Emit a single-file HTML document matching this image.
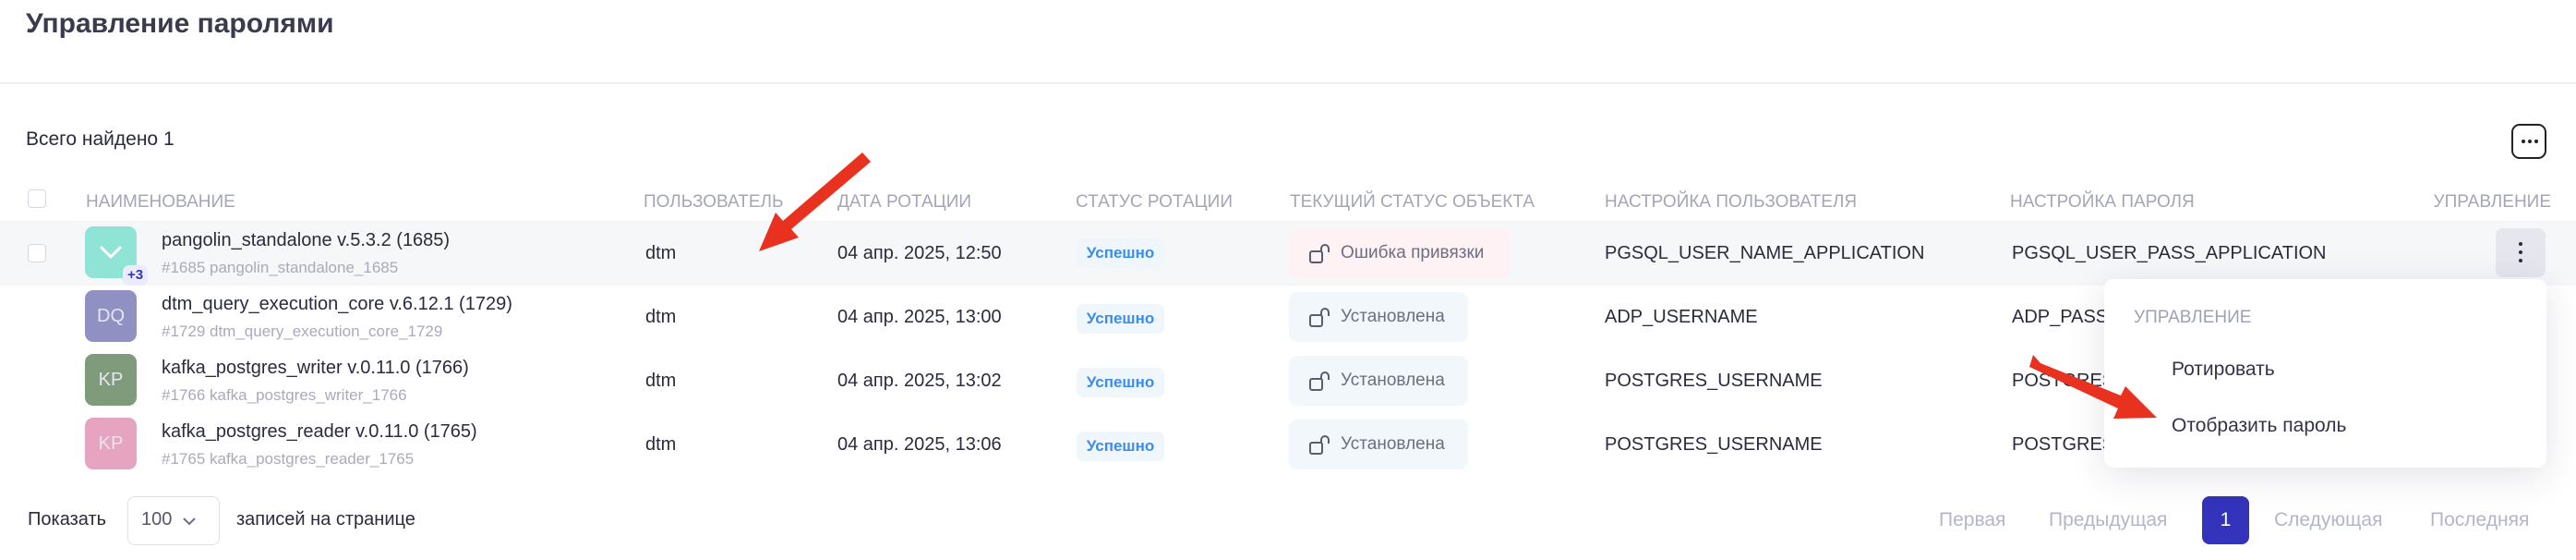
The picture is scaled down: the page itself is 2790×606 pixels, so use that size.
<!DOCTYPE html>
<html><head><meta charset="utf-8"><style>
*{margin:0;padding:0;box-sizing:border-box}
body{width:2790px;height:606px;background:#fff;font-family:"Liberation Sans",sans-serif;color:#2a2b3d;position:relative;overflow:hidden}
.a{position:absolute;white-space:nowrap}
.h{font-size:19px;color:#a4a5b8;text-transform:uppercase;top:208px}
.cb{position:absolute;width:20px;height:20px;border:1.5px solid #d6d7e0;border-radius:4px;left:30px;background:#fff}
.av{position:absolute;left:92px;width:56px;height:56px;border-radius:9px;color:#e6e6f2;font-size:20px;display:flex;align-items:center;justify-content:center}
.nm{font-size:20px;left:175px}
.sb{font-size:17px;color:#a9aabb;left:175px}
.t{font-size:20px}
.ok{position:absolute;left:1166px;width:95px;height:32px;border-radius:7px;background:#eff6fc;color:#3b8ded;font-weight:bold;font-size:17px;display:flex;align-items:center;justify-content:center}
.os{position:absolute;left:1396px;width:194px;height:54px;border-radius:9px;background:#f1f7fb;color:#6c6e82;font-size:19px;display:flex;align-items:center;padding-left:22px}
.os svg{margin-right:11px}
.pg{font-size:21px;color:#b4b5c8;top:551px}
</style></head><body>
<div class="a" style="left:28px;top:9px;font-size:30px;font-weight:bold;color:#3a3b4f">Управление паролями</div>
<div style="position:absolute;left:0;top:89px;width:2790px;height:2px;background:#eef0f4"></div>
<div class="a" style="left:28px;top:139px;font-size:21px">Всего найдено 1</div>
<div style="position:absolute;left:2720px;top:134px;width:38px;height:38px;border:2.5px solid #222;border-radius:9px">
<div style="position:absolute;left:9px;top:15px;width:4px;height:4px;border-radius:2px;background:#222;box-shadow:7px 0 0 #222,14px 0 0 #222"></div></div>

<div class="cb" style="top:205px"></div>
<div class="a h" style="left:93px">Наименование</div>
<div class="a h" style="left:697px">Пользователь</div>
<div class="a h" style="left:907px">Дата ротации</div>
<div class="a h" style="left:1165px">Статус ротации</div>
<div class="a h" style="left:1397px">Текущий статус объекта</div>
<div class="a h" style="left:1738px">Настройка пользователя</div>
<div class="a h" style="left:2177px">Настройка пароля</div>
<div class="a h" style="right:27px">Управление</div>

<div style="position:absolute;left:0;top:239px;width:2790px;height:70px;background:#f6f7f9"></div>
<div class="cb" style="top:264px"></div>

<!-- row 1 -->
<div class="av" style="top:245px;background:#8fe4d6"><svg width="24" height="14" viewBox="0 0 24 14"><path d="M2 2l10 10L22 2" fill="none" stroke="#fff" stroke-width="3" stroke-linecap="round" stroke-linejoin="round"/></svg></div>
<div style="position:absolute;left:133px;top:287px;width:27px;height:22px;border-radius:7px;background:#ecebfb;color:#3434b8;font-weight:bold;font-size:15px;text-align:center;line-height:22px">+3</div>
<div class="a nm" style="top:249px">pangolin_standalone v.5.3.2 (1685)</div>
<div class="a sb" style="top:280px">#1685 pangolin_standalone_1685</div>
<div class="a t" style="left:699px;top:263px">dtm</div>
<div class="a t" style="left:907px;top:263px">04 апр. 2025, 12:50</div>
<div class="ok" style="top:258px">Успешно</div>
<div class="os" style="top:247px;width:240px;background:#fff2f5"><svg width="23" height="22" viewBox="0 0 23 22"><rect x="1" y="9" width="13" height="12" rx="2" fill="none" stroke="#5a5c70" stroke-width="2"/><path d="M13 9V6a4 4 0 0 1 8 0v4" fill="none" stroke="#5a5c70" stroke-width="2"/></svg>Ошибка привязки</div>
<div class="a t" style="left:1738px;top:263px">PGSQL_USER_NAME_APPLICATION</div>
<div class="a t" style="left:2179px;top:263px">PGSQL_USER_PASS_APPLICATION</div>
<div style="position:absolute;left:2703px;top:247px;width:54px;height:53px;border-radius:8px;background:#e5e6ee"><div style="position:absolute;left:25px;top:15px;width:4px;height:4px;border-radius:2px;background:#2a2b3d;box-shadow:0 9px 0 #2a2b3d,0 18px 0 #2a2b3d"></div></div>

<!-- row 2 -->
<div class="av" style="top:314px;background:#9190c2">DQ</div>
<div class="a nm" style="top:318px">dtm_query_execution_core v.6.12.1 (1729)</div>
<div class="a sb" style="top:349px">#1729 dtm_query_execution_core_1729</div>
<div class="a t" style="left:699px;top:332px">dtm</div>
<div class="a t" style="left:907px;top:332px">04 апр. 2025, 13:00</div>
<div class="ok" style="top:329px">Успешно</div>
<div class="os" style="top:316px"><svg width="23" height="22" viewBox="0 0 23 22"><rect x="1" y="9" width="13" height="12" rx="2" fill="none" stroke="#5a5c70" stroke-width="2"/><path d="M13 9V6a4 4 0 0 1 8 0v4" fill="none" stroke="#5a5c70" stroke-width="2"/></svg>Установлена</div>
<div class="a t" style="left:1738px;top:332px">ADP_USERNAME</div>
<div class="a t" style="left:2179px;top:332px">ADP_PASSWORD</div>

<!-- row 3 -->
<div class="av" style="top:383px;background:#7f9b7b">KP</div>
<div class="a nm" style="top:387px">kafka_postgres_writer v.0.11.0 (1766)</div>
<div class="a sb" style="top:418px">#1766 kafka_postgres_writer_1766</div>
<div class="a t" style="left:699px;top:401px">dtm</div>
<div class="a t" style="left:907px;top:401px">04 апр. 2025, 13:02</div>
<div class="ok" style="top:398px">Успешно</div>
<div class="os" style="top:385px"><svg width="23" height="22" viewBox="0 0 23 22"><rect x="1" y="9" width="13" height="12" rx="2" fill="none" stroke="#5a5c70" stroke-width="2"/><path d="M13 9V6a4 4 0 0 1 8 0v4" fill="none" stroke="#5a5c70" stroke-width="2"/></svg>Установлена</div>
<div class="a t" style="left:1738px;top:401px">POSTGRES_USERNAME</div>
<div class="a t" style="left:2179px;top:401px">POSTGRES_PASSWORD</div>

<!-- row 4 -->
<div class="av" style="top:452px;background:#e6a4c1">KP</div>
<div class="a nm" style="top:456px">kafka_postgres_reader v.0.11.0 (1765)</div>
<div class="a sb" style="top:487px">#1765 kafka_postgres_reader_1765</div>
<div class="a t" style="left:699px;top:470px">dtm</div>
<div class="a t" style="left:907px;top:470px">04 апр. 2025, 13:06</div>
<div class="ok" style="top:467px">Успешно</div>
<div class="os" style="top:454px"><svg width="23" height="22" viewBox="0 0 23 22"><rect x="1" y="9" width="13" height="12" rx="2" fill="none" stroke="#5a5c70" stroke-width="2"/><path d="M13 9V6a4 4 0 0 1 8 0v4" fill="none" stroke="#5a5c70" stroke-width="2"/></svg>Установлена</div>
<div class="a t" style="left:1738px;top:470px">POSTGRES_USERNAME</div>
<div class="a t" style="left:2179px;top:470px">POSTGRES_PASSWORD</div>

<!-- footer -->
<div class="a" style="left:30px;top:551px;font-size:20px">Показать</div>
<div style="position:absolute;left:138px;top:537px;width:100px;height:53px;border:1.5px solid #dfe0ea;border-radius:8px"></div>
<div class="a" style="left:153px;top:551px;font-size:20px;color:#55576c">100</div>
<svg class="a" style="left:197px;top:559px" width="16" height="10" viewBox="0 0 16 10"><path d="M2 2l6 6 6-6" fill="none" stroke="#6c6e82" stroke-width="2"/></svg>
<div class="a" style="left:256px;top:551px;font-size:20px">записей на странице</div>
<div class="a pg" style="left:2100px">Первая</div>
<div class="a pg" style="left:2219px">Предыдущая</div>
<div style="position:absolute;left:2385px;top:537px;width:51px;height:52px;border-radius:8px;background:#3333bb;color:#fff;font-size:21px;text-align:center;line-height:52px">1</div>
<div class="a pg" style="left:2463px">Следующая</div>
<div class="a pg" style="left:2632px">Последняя</div>

<!-- dropdown -->
<div style="position:absolute;left:2279px;top:302px;width:479px;height:204px;background:#fff;border-radius:10px;box-shadow:0 8px 40px rgba(40,40,80,0.13)">
<div class="a" style="left:32px;top:31px;font-size:19px;color:#9fa0b6">УПРАВЛЕНИЕ</div>
<div class="a" style="left:73px;top:86px;font-size:21px;color:#33344a">Ротировать</div>
<div class="a" style="left:73px;top:147px;font-size:21px;color:#33344a">Отобразить пароль</div>
</div>

<!-- arrows -->
<svg class="a" style="left:0;top:0" width="2790" height="606">
<path d="M934 165 L943 175 L857 248 L865 257 L822 272 L840 230 L848 239 Z" fill="#e8311f"/>
<path d="M2202 384 L2210 393 L2297 428 L2302 418 L2336 452 L2289 453 L2294 442 L2198 397 Z" fill="#e8311f"/>
</svg>
</body></html>
